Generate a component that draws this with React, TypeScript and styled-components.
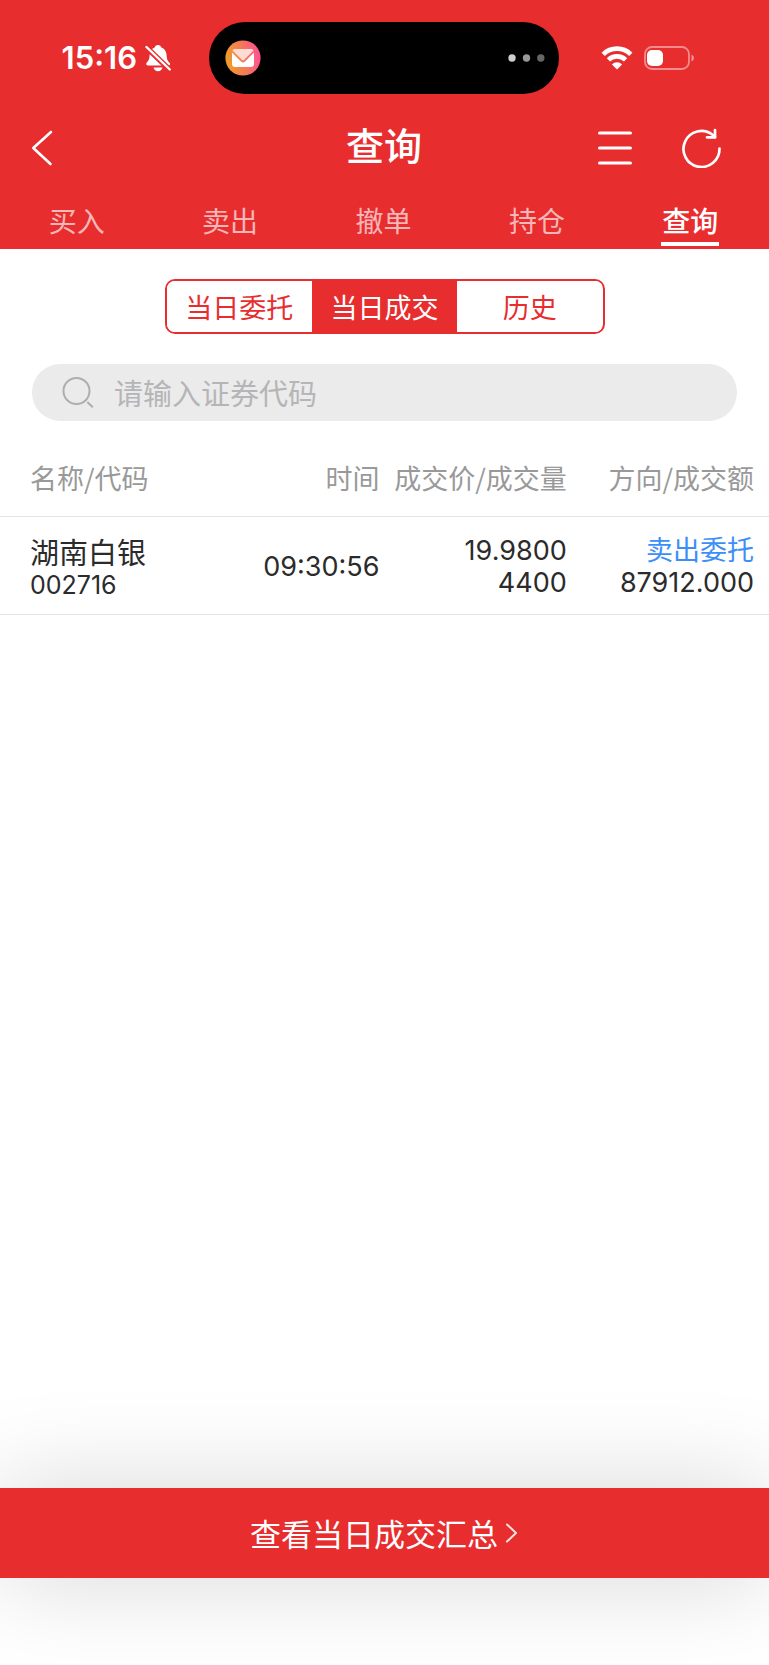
import React, { useState } from "react";
import styled, { createGlobalStyle } from "styled-components";

const RED = "#e82d2f";
const CJK = `"Noto Sans CJK SC", sans-serif`;
const LATIN = `Inter, "Noto Sans CJK SC", sans-serif`;

const GlobalStyle = createGlobalStyle`
  *, *::before, *::after { box-sizing: border-box; }
  body { margin: 0; background: #fff; font-family: ${CJK}; color: #2b2b2b; }
  button { margin: 0; padding: 0; border: 0; background: none; color: inherit; font: inherit; cursor: pointer; }
  svg { display: block; }
`;

const Page = styled.div`
  display: flex;
  flex-direction: column;
  min-height: 100vh;
  overflow: hidden;
`;

const Header = styled.header`
  background: ${RED};
  color: #fff;
`;

const StatusBar = styled.div`
  display: grid;
  grid-template-columns: 1fr 350px 1fr;
  align-items: center;
  padding: 22px 1px 0 0;
`;

const StatusLeft = styled.div`
  display: flex;
  align-items: center;
  justify-content: flex-end;
  gap: 8px;
  padding-right: 38px;
`;

const Clock = styled.time`
  font: 600 31px/36px ${LATIN};
`;

const Island = styled.div`
  display: flex;
  align-items: center;
  justify-content: space-between;
  height: 72px;
  padding: 0 14px 0 16px;
  border-radius: 36px;
  background: #000;
`;

const StatusRight = styled.div`
  display: flex;
  align-items: center;
  gap: 11px;
  padding-left: 42px;
`;

const TitleBar = styled.div`
  display: grid;
  grid-template-columns: 1fr auto 1fr;
  align-items: center;
  height: 108px;
  padding: 0 48px 0 30px;
`;

const Title = styled.h1`
  margin: 0;
  padding: 0 0 8px 17px;
  font-size: 38px;
  line-height: 56px;
  font-weight: 500;
`;

const Actions = styled.div`
  display: flex;
  justify-content: flex-end;
  align-items: center;
  gap: 48px;
`;

const IconButton = styled.button`
  display: flex;
  justify-self: start;
`;

const Tabs = styled.nav`
  display: grid;
  grid-template-columns: repeat(5, 1fr);
  height: 47px;
  padding-right: 2px;
`;

const Tab = styled.button<{ $active: boolean }>`
  display: flex;
  flex-direction: column;
  align-items: center;
  justify-content: space-between;
  padding-bottom: 3px;
  font-size: 28px;
  line-height: 36px;
  font-weight: ${(p) => (p.$active ? 500 : 400)};
  color: ${(p) => (p.$active ? "#fff" : "rgba(255, 255, 255, 0.66)")};

  &::after {
    content: "";
    width: 58px;
    height: 4px;
    background: ${(p) => (p.$active ? "#fff" : "transparent")};
  }
`;

const Main = styled.main`
  flex: 1;
`;

const Segments = styled.div`
  display: grid;
  grid-template-columns: repeat(3, 1fr);
  width: 440px;
  height: 55px;
  margin: 30px auto 30px;
  overflow: hidden;
  border: 2px solid ${RED};
  border-radius: 10px;
`;

const Segment = styled.button<{ $active: boolean }>`
  font-size: 27px;
  line-height: 40px;
  color: ${(p) => (p.$active ? "#fff" : RED)};
  background: ${(p) => (p.$active ? RED : "#fff")};
`;

const SearchBox = styled.label`
  display: flex;
  align-items: center;
  gap: 18px;
  height: 57px;
  margin: 0 32px;
  padding: 0 30px;
  border-radius: 29px;
  background: #ebebeb;
`;

const SearchInput = styled.input`
  flex: 1;
  min-width: 0;
  height: 44px;
  padding: 0 0 2px;
  border: 0;
  outline: 0;
  background: none;
  font: 400 29px/42px ${CJK};
  color: #2b2b2b;

  &::placeholder {
    color: #b5b5b7;
    opacity: 1;
  }
`;

const Table = styled.table`
  width: 100%;
  margin-top: 20px;
  border-collapse: collapse;
  table-layout: fixed;
`;

const Row = styled.tr`
  border-bottom: 1px solid #e3e3e3;
`;

const HeadCell = styled.th<{ $inset: number }>`
  height: 75px;
  padding: 0 ${(p) => p.$inset}px 0 0;
  font-size: 27px;
  line-height: 40px;
  font-weight: 400;
  text-align: right;
  white-space: nowrap;
  color: #999;

  &:first-child {
    padding-left: 30px;
    text-align: left;
  }
`;

const Cell = styled.td<{ $inset: number }>`
  height: 98px;
  padding: 3px ${(p) => p.$inset}px 0 0;
  font: 400 27px/32px ${LATIN};
  text-align: right;
  white-space: nowrap;

  &:first-child {
    padding-top: 7px;
    padding-left: 30px;
    text-align: left;
  }
`;

const StockName = styled.div`
  font-size: 29px;
`;

const StockCode = styled.div`
  font-size: 25px;
  line-height: 30px;
`;

const Direction = styled.div`
  color: #3c8ff7;
`;

const Footer = styled.footer`
  padding-bottom: 87px;
`;

const SummaryButton = styled.button`
  display: flex;
  align-items: center;
  justify-content: center;
  gap: 7px;
  width: 100%;
  height: 90px;
  background: ${RED};
  color: #fff;
  font-size: 31px;
  line-height: 46px;
  box-shadow: 0 0 100px rgba(0, 0, 0, 0.17);
`;

const BellOff = () => (
  <svg width="26" height="28" viewBox="0 0 26 28" aria-hidden="true">
    <path
      fill="#fff"
      d="M13 1c1.8 0 3 1 3.300 2.500C20 4.800 21.500 8 21.600 11.500c.2 4 1 5.500 2.900 7.300.9.900 1 2.700-1 2.700H3.200c-2 0-2.600-1.800-1.400-3 2-1.900 2.600-3.500 2.800-7C4.800 8 6.200 4.800 9.700 3.500 10 2 11.200 1 13 1Z"
    />
    <path fill="#fff" d="M8.500 23.500h9c-.6 2.200-2.300 3.700-4.500 3.700s-3.900-1.500-4.500-3.700Z" />
    <path d="M0 2 25 26" stroke={RED} strokeWidth="5.400" />
    <path d="M1.500 3 24.800 25.500" stroke="#fff" strokeWidth="2.400" strokeLinecap="round" />
  </svg>
);

const MailBadge = () => (
  <svg width="36" height="36" viewBox="0 0 36 36" aria-hidden="true">
    <defs>
      <linearGradient id="mail" x1="0" y1="0.600" x2="1" y2="0.400">
        <stop offset="0" stopColor="#eda024" />
        <stop offset="0.500" stopColor="#f57a57" />
        <stop offset="1" stopColor="#ff4f94" />
      </linearGradient>
    </defs>
    <circle cx="18" cy="18" r="17.600" fill="url(#mail)" />
    <path
      fill="#fff"
      d="M7 12.500 16 21.500a2.800 2.800 0 0 0 4 0L29 12.500V24a3 3 0 0 1-3 3H10a3 3 0 0 1-3-3Z"
    />
    <path
      fill="#ffdcd3"
      d="M10 9h16c1.200 0 2.200.6 2.500 1.500l-9.300 9.300a1.700 1.700 0 0 1-2.400 0L7.500 10.500C7.900 9.600 8.800 9 10 9Z"
    />
  </svg>
);

const Dots = () => (
  <svg width="37" height="8" viewBox="0 0 37 8" aria-hidden="true">
    <circle cx="4" cy="4" r="3.700" fill="#cfcfcf" />
    <circle cx="18.500" cy="4" r="3.700" fill="#999" />
    <circle cx="32.800" cy="4" r="3.700" fill="#666" />
  </svg>
);

const Wifi = () => (
  <svg width="32" height="24" viewBox="0 0 32 24" aria-hidden="true">
    <g fill="none" stroke="#fff" strokeWidth="4.600">
      <path d="M2.200 8.300a19.500 19.500 0 0 1 27.600 0" />
      <path d="M7.400 13.900a12.200 12.200 0 0 1 17.200 0" />
    </g>
    <path fill="#fff" d="M16 23.600 10.900 18.400a7.200 7.200 0 0 1 10.200 0Z" />
  </svg>
);

const Battery = () => (
  <svg width="52" height="24" viewBox="0 0 52 24" aria-hidden="true">
    <rect x="1" y="1" width="44" height="22" rx="7" fill="none" stroke="#fff" strokeOpacity="0.450" strokeWidth="1.800" />
    <rect x="3" y="4" width="16" height="16" rx="5" fill="#fff" />
    <path d="M47.500 8.500c3.200 1.500 3.200 5.500 0 7Z" fill="#fff" fillOpacity="0.500" />
  </svg>
);

const BackIcon = () => (
  <svg width="24" height="38" viewBox="0 0 24 38" fill="none" stroke="#fff" strokeWidth="2.600" strokeLinecap="round" strokeLinejoin="round" aria-hidden="true">
    <path d="M21 3 3.300 19 20.500 35" />
  </svg>
);

const MenuIcon = () => (
  <svg width="36" height="34" viewBox="0 0 36 34" stroke="#fff" strokeWidth="3" strokeLinecap="round" aria-hidden="true">
    <path d="M2.500 2h31M2.500 17h31M2.500 32h31" />
  </svg>
);

const RefreshIcon = () => (
  <svg width="40" height="40" viewBox="0 0 40 40" fill="none" stroke="#fff" strokeWidth="2.700" strokeLinecap="round" strokeLinejoin="round" aria-hidden="true">
    <path d="M38.500 20.500A18 18 0 1 1 31.500 6.700L34 9.300" />
    <path d="M34 2V9.300H26" />
  </svg>
);

const SearchIcon = () => (
  <svg width="34" height="34" viewBox="0 0 34 34" fill="none" stroke="#aeaeb0" strokeWidth="2" aria-hidden="true">
    <circle cx="14.500" cy="15" r="13" />
    <path d="M25.300 26 30.800 31.300" />
  </svg>
);

const ChevronIcon = () => (
  <svg width="14" height="22" viewBox="0 0 14 22" fill="none" stroke="#ffe3e3" strokeWidth="2" strokeLinecap="round" strokeLinejoin="round" aria-hidden="true">
    <path d="M2 2.500 11 11 2 19.500" />
  </svg>
);

const TABS = ["买入", "卖出", "撤单", "持仓", "查询"];
const SEGMENTS = ["当日委托", "当日成交", "历史"];
const COLUMNS = [
  { label: "名称/代码", inset: 0 },
  { label: "时间", inset: 5 },
  { label: "成交价/成交量", inset: 10 },
  { label: "方向/成交额", inset: 15 },
];
const TRADES = [
  { name: "湖南白银", code: "002716", time: "09:30:56", price: "19.9800", volume: "4400", direction: "卖出委托", amount: "87912.000" },
];

export default function App() {
  const [tab, setTab] = useState("查询");
  const [segment, setSegment] = useState("当日成交");

  return (
    <>
      <GlobalStyle />
      <Page>
        <Header>
          <StatusBar>
            <StatusLeft>
              <Clock>15:16</Clock>
              <BellOff />
            </StatusLeft>
            <Island>
              <MailBadge />
              <Dots />
            </Island>
            <StatusRight>
              <Wifi />
              <Battery />
            </StatusRight>
          </StatusBar>
          <TitleBar>
            <IconButton aria-label="返回">
              <BackIcon />
            </IconButton>
            <Title>查询</Title>
            <Actions>
              <IconButton aria-label="菜单">
                <MenuIcon />
              </IconButton>
              <IconButton aria-label="刷新">
                <RefreshIcon />
              </IconButton>
            </Actions>
          </TitleBar>
          <Tabs>
            {TABS.map((t) => (
              <Tab key={t} $active={t === tab} onClick={() => setTab(t)}>
                {t}
              </Tab>
            ))}
          </Tabs>
        </Header>
        <Main>
          <Segments>
            {SEGMENTS.map((s) => (
              <Segment key={s} $active={s === segment} onClick={() => setSegment(s)}>
                {s}
              </Segment>
            ))}
          </Segments>
          <SearchBox>
            <SearchIcon />
            <SearchInput type="text" placeholder="请输入证券代码" aria-label="证券代码" />
          </SearchBox>
          <Table>
            <thead>
              <Row>
                {COLUMNS.map((c) => (
                  <HeadCell key={c.label} scope="col" $inset={c.inset}>
                    {c.label}
                  </HeadCell>
                ))}
              </Row>
            </thead>
            <tbody>
              {TRADES.map((t) => (
                <Row key={t.code}>
                  <Cell $inset={COLUMNS[0].inset}>
                    <StockName>{t.name}</StockName>
                    <StockCode>{t.code}</StockCode>
                  </Cell>
                  <Cell $inset={COLUMNS[1].inset}>{t.time}</Cell>
                  <Cell $inset={COLUMNS[2].inset}>
                    <div>{t.price}</div>
                    <div>{t.volume}</div>
                  </Cell>
                  <Cell $inset={COLUMNS[3].inset}>
                    <Direction>{t.direction}</Direction>
                    <div>{t.amount}</div>
                  </Cell>
                </Row>
              ))}
            </tbody>
          </Table>
        </Main>
        <Footer>
          <SummaryButton>
            查看当日成交汇总
            <ChevronIcon />
          </SummaryButton>
        </Footer>
      </Page>
    </>
  );
}
